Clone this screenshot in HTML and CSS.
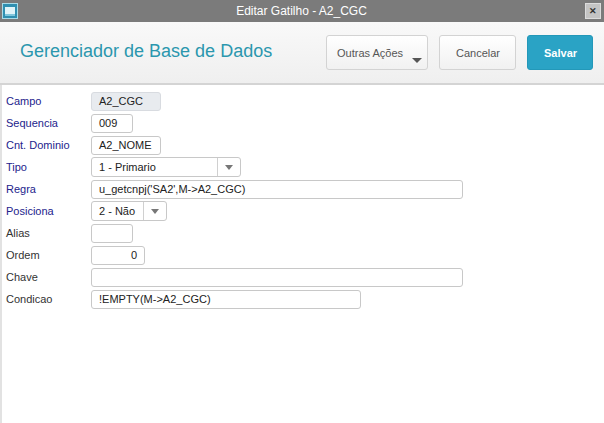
FILE: index.html
```html
<!DOCTYPE html>
<html lang="pt">
<head>
    <meta charset="UTF-8">
    <title>Editar Gatilho - A2_CGC</title>
    <link rel="stylesheet" href="styles.css">
</head>
<body>
    <div class="titlebar">
        <span class="app-icon"><span></span></span>
        <span class="title">Editar Gatilho - A2_CGC</span>
        <span class="close">&#x2715;</span>
    </div>
    <div class="header">
        <h1>Gerenciador de Base de Dados</h1>
        <div class="actions">
            <button class="btn more">Outras Ações<span class="caret"></span></button>
            <button class="btn cancel">Cancelar</button>
            <button class="btn primary">Salvar</button>
        </div>
    </div>
    <div class="content">
        <div class="row">
            <label class="req">Campo</label>
            <div class="field w70 readonly">A2_CGC</div>
        </div>
        <div class="row">
            <label class="req">Sequencia</label>
            <div class="field w42">009</div>
        </div>
        <div class="row">
            <label class="req">Cnt. Dominio</label>
            <div class="field w70">A2_NOME</div>
        </div>
        <div class="row">
            <label class="req">Tipo</label>
            <div class="field combo w150">
                <span class="val">1 - Primario</span>
                <span class="arrow"></span>
            </div>
        </div>
        <div class="row">
            <label class="req">Regra</label>
            <div class="field w372">u_getcnpj('SA2',M-&gt;A2_CGC)</div>
        </div>
        <div class="row">
            <label class="req">Posiciona</label>
            <div class="field combo w76">
                <span class="val">2 - Não</span>
                <span class="arrow"></span>
            </div>
        </div>
        <div class="row">
            <label>Alias</label>
            <div class="field w42"></div>
        </div>
        <div class="row">
            <label>Ordem</label>
            <div class="field w54 num">0</div>
        </div>
        <div class="row">
            <label>Chave</label>
            <div class="field w372"></div>
        </div>
        <div class="row">
            <label>Condicao</label>
            <div class="field w270">!EMPTY(M-&gt;A2_CGC)</div>
        </div>
    </div>
</body>
</html>
```

FILE: styles.css
```css
html, body {
    margin: 0;
    height: 100%;
}
body {
    font-family: "Liberation Sans", Arial, sans-serif;
    font-size: 11px;
    color: #333;
    background: #fff;
    display: flex;
    flex-direction: column;
}
.titlebar {
    height: 22px;
    background: #7b7b7b;
    display: flex;
    align-items: center;
    padding: 0 3px 0 2px;
    box-sizing: border-box;
}
.app-icon {
    width: 16px;
    height: 16px;
    background: #2f8fb0;
    border: 1px solid #a8dbe8;
    box-sizing: border-box;
    display: flex;
    align-items: center;
    justify-content: center;
}
.app-icon span {
    width: 10px;
    height: 7px;
    background: #dff3f8;
    border-bottom: 2px solid #7fc6dc;
}
.title {
    flex: 1;
    text-align: center;
    color: #fff;
    font-size: 12px;
}
.close {
    width: 16px;
    height: 16px;
    background: #c4c4c4;
    border: 1px solid #dcdcdc;
    box-sizing: border-box;
    color: #333;
    font-size: 9px;
    font-weight: bold;
    display: flex;
    align-items: center;
    justify-content: center;
}
.header {
    height: 61px;
    background: linear-gradient(#f9f9f9, #efefef);
    border-bottom: 2px solid #d4d4d4;
    display: flex;
    align-items: center;
    justify-content: space-between;
    padding: 0 11px 0 20px;
}
.header h1 {
    margin: 0 0 2px;
    font-weight: normal;
    font-size: 18px;
    color: #2b97ae;
}
.actions {
    display: flex;
    gap: 11px;
}
.btn {
    height: 35px;
    padding: 0 16px;
    font-family: inherit;
    font-size: 11px;
    color: #555;
    background: linear-gradient(#ffffff, #f1f1f1);
    border: 1px solid #d3d3d3;
    border-radius: 3px;
    position: relative;
}
.btn.more {
    width: 102px;
    padding: 0 12px 0 10px;
    text-align: left;
}
.btn.more .caret {
    position: absolute;
    right: 5px;
    bottom: 6px;
    border-left: 5px solid transparent;
    border-right: 5px solid transparent;
    border-top: 5px solid #555;
}
.btn.cancel {
    width: 77px;
}
.btn.primary {
    width: 66px;
    background: #2aa3c5;
    border-color: #2398b9;
    color: #fff;
    font-weight: bold;
}
.content {
    flex: 1;
    border-left: 2px solid #e2e2e2;
    padding: 5px 0 0 4px;
}
.row {
    display: flex;
    align-items: center;
    height: 22px;
}
.row label {
    width: 85px;
    color: #333;
}
.row label.req {
    color: #23238c;
}
.field {
    height: 19px;
    box-sizing: border-box;
    border: 1px solid #c8c8c8;
    border-radius: 3px;
    background: #fff;
    padding: 0 7px;
    display: flex;
    align-items: center;
    color: #222;
}
.field.readonly {
    background: #e8ebef;
    border-color: #d8dbe0;
}
.field.num {
    justify-content: flex-end;
}
.field.combo {
    padding-right: 0;
    height: 20px;
}
.field.combo .val {
    flex: 1;
}
.field.combo .arrow {
    width: 22px;
    height: 100%;
    border-left: 1px solid #d0d0d0;
    display: flex;
    align-items: center;
    justify-content: center;
}
.field.combo .arrow::after {
    content: "";
    border-left: 4px solid transparent;
    border-right: 4px solid transparent;
    border-top: 5px solid #777;
}
.w42 { width: 42px; }
.w54 { width: 54px; }
.w70 { width: 70px; }
.w76 { width: 76px; }
.w150 { width: 150px; }
.w270 { width: 270px; }
.w372 { width: 372px; }
```
